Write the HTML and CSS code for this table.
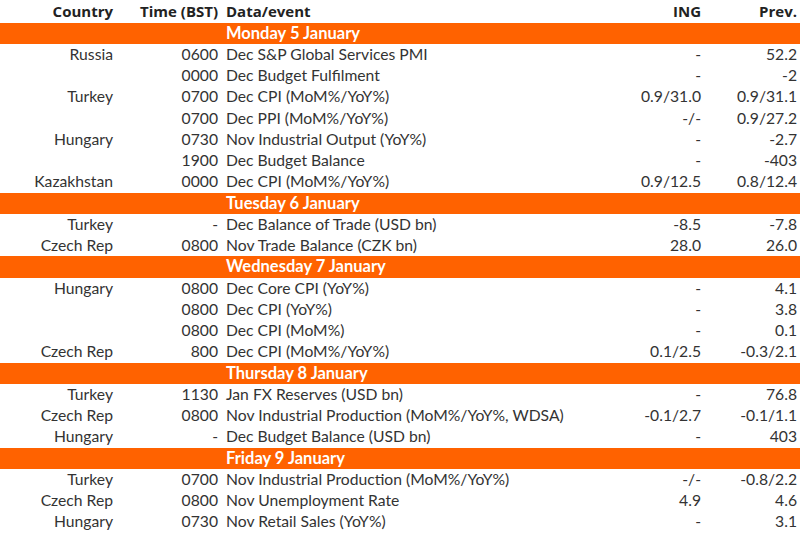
FILE: index.html
```html
<!DOCTYPE html>
<html>
<head>
<meta charset="utf-8">
<link rel="stylesheet" href="styles.css">
</head>
<body>
<table class="cal">
<colgroup><col class="c1"><col class="c2"><col class="c3"><col class="c4"><col class="c5"></colgroup>
<thead>
<tr class="head"><th class="r">Country</th><th class="r">Time (BST)</th><th class="l">Data/event</th><th class="r">ING</th><th class="r">Prev.</th></tr>
</thead>
<tbody>
<tr class="day"><td></td><td></td><td colspan="3">Monday 5 January</td></tr>
<tr><td class="r">Russia</td><td class="r">0600</td><td>Dec S&amp;P Global Services PMI</td><td class="r">-</td><td class="r">52.2</td></tr>
<tr><td class="r"></td><td class="r">0000</td><td>Dec Budget Fulfilment</td><td class="r">-</td><td class="r">-2</td></tr>
<tr><td class="r">Turkey</td><td class="r">0700</td><td>Dec CPI (MoM%/YoY%)</td><td class="r">0.9/31.0</td><td class="r">0.9/31.1</td></tr>
<tr><td class="r"></td><td class="r">0700</td><td>Dec PPI (MoM%/YoY%)</td><td class="r">-/-</td><td class="r">0.9/27.2</td></tr>
<tr><td class="r">Hungary</td><td class="r">0730</td><td>Nov Industrial Output (YoY%)</td><td class="r">-</td><td class="r">-2.7</td></tr>
<tr><td class="r"></td><td class="r">1900</td><td>Dec Budget Balance</td><td class="r">-</td><td class="r">-403</td></tr>
<tr><td class="r">Kazakhstan</td><td class="r">0000</td><td>Dec CPI (MoM%/YoY%)</td><td class="r">0.9/12.5</td><td class="r">0.8/12.4</td></tr>
<tr class="day"><td></td><td></td><td colspan="3">Tuesday 6 January</td></tr>
<tr><td class="r">Turkey</td><td class="r">-</td><td>Dec Balance of Trade (USD bn)</td><td class="r">-8.5</td><td class="r">-7.8</td></tr>
<tr><td class="r">Czech Rep</td><td class="r">0800</td><td>Nov Trade Balance (CZK bn)</td><td class="r">28.0</td><td class="r">26.0</td></tr>
<tr class="day"><td></td><td></td><td colspan="3">Wednesday 7 January</td></tr>
<tr><td class="r">Hungary</td><td class="r">0800</td><td>Dec Core CPI (YoY%)</td><td class="r">-</td><td class="r">4.1</td></tr>
<tr><td class="r"></td><td class="r">0800</td><td>Dec CPI (YoY%)</td><td class="r">-</td><td class="r">3.8</td></tr>
<tr><td class="r"></td><td class="r">0800</td><td>Dec CPI (MoM%)</td><td class="r">-</td><td class="r">0.1</td></tr>
<tr><td class="r">Czech Rep</td><td class="r">800</td><td>Dec CPI (MoM%/YoY%)</td><td class="r">0.1/2.5</td><td class="r">-0.3/2.1</td></tr>
<tr class="day"><td></td><td></td><td colspan="3">Thursday 8 January</td></tr>
<tr><td class="r">Turkey</td><td class="r">1130</td><td>Jan FX Reserves (USD bn)</td><td class="r">-</td><td class="r">76.8</td></tr>
<tr><td class="r">Czech Rep</td><td class="r">0800</td><td>Nov Industrial Production (MoM%/YoY%, WDSA)</td><td class="r">-0.1/2.7</td><td class="r">-0.1/1.1</td></tr>
<tr><td class="r">Hungary</td><td class="r">-</td><td>Dec Budget Balance (USD bn)</td><td class="r">-</td><td class="r">403</td></tr>
<tr class="day"><td></td><td></td><td colspan="3">Friday 9 January</td></tr>
<tr><td class="r">Turkey</td><td class="r">0700</td><td>Nov Industrial Production (MoM%/YoY%)</td><td class="r">-/-</td><td class="r">-0.8/2.2</td></tr>
<tr><td class="r">Czech Rep</td><td class="r">0800</td><td>Nov Unemployment Rate</td><td class="r">4.9</td><td class="r">4.6</td></tr>
<tr><td class="r">Hungary</td><td class="r">0730</td><td>Nov Retail Sales (YoY%)</td><td class="r">-</td><td class="r">3.1</td></tr>
</tbody>
</table>
</body>
</html>
```
FILE: styles.css
```css
html, body {
  margin: 0;
  padding: 0;
  background: #fff;
}
.cal {
  width: 800px;
  border-collapse: collapse;
  table-layout: fixed;
  font-family: Lato, "Open Sans", sans-serif;
  font-size: 15.7px;
  color: #333;
}
.c1 { width: 117px; }
.c2 { width: 105px; }
.c3 { width: 385px; }
.c4 { width: 98px; }
.c5 { width: 95px; }
.cal tr { height: 21.25px; }
.cal tr.head { height: 22.5px; }
.cal td, .cal th {
  padding: 0 4px 0 4px;
  white-space: nowrap;
  line-height: 21px;
  overflow: visible;
}
.cal th.l, .cal td { text-align: left; }
.cal td.r, .cal th.r { text-align: right; }
.head th {
  font-weight: 700;
  color: #222;
  font-family: "Open Sans", Lato, sans-serif;
  font-size: 15px;
}
.day td {
  background: #ff6200;
  color: #fff;
  font-weight: 700;
  font-size: 16.5px;
}
.cal td:last-child, .cal th:last-child { padding-right: 3px; }
```
